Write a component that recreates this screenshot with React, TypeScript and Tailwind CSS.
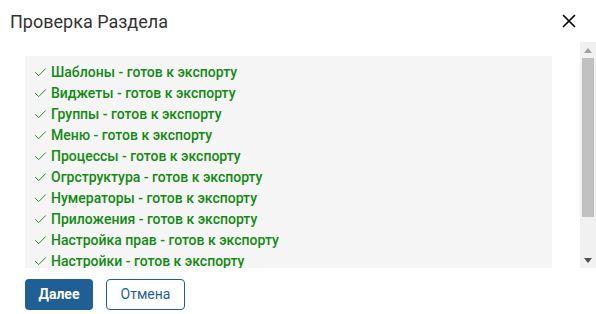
import React from 'react';
import { X, Check } from 'lucide-react';

const sections = [
  'Шаблоны',
  'Виджеты',
  'Группы',
  'Меню',
  'Процессы',
  'Огрструктура',
  'Нумераторы',
  'Приложения',
  'Настройка прав',
  'Настройки',
  'Справочники',
  'Календари',
];

const App: React.FC = () => {
  return (
    <div className="w-[596px] h-[314px] bg-white flex flex-col font-['Roboto',sans-serif] overflow-hidden">
      {/* Header */}
      <div className="h-[42px] shrink-0 flex items-center justify-between pl-[10px] pr-[16px]">
        <h1 className="text-[18px] text-[#333333]">Проверка Раздела</h1>
        <X className="h-[22px] w-[22px] text-black" strokeWidth={1.8} />
      </div>

      {/* Section list with scrollbar */}
      <div className="h-[226px] shrink-0 flex">
        <div className="flex-1 overflow-hidden pt-[14px] pl-[25px] pr-[28px]">
          <div className="bg-[#f5f5f5] py-[6px] px-[8px]">
            {sections.map((name) => (
              <div key={name} className="h-[21px] flex items-center gap-[3px] text-[14px] font-medium text-[#138a13]">
                <Check className="h-[15px] w-[15px] shrink-0" strokeWidth={1.5} />
                <span>{name} - готов к экспорту</span>
              </div>
            ))}
          </div>
        </div>
        <div className="w-[16px] bg-[#f1f1f1] flex flex-col items-center">
          <div className="h-[16px] flex items-center justify-center">
            <svg width="8" height="5" viewBox="0 0 8 5"><path d="M0 5 L4 0 L8 5 Z" fill="#a3a3a3" /></svg>
          </div>
          <div className="w-[12px] h-[159px] bg-[#c1c1c1]" />
          <div className="flex-1" />
          <div className="h-[16px] flex items-center justify-center">
            <svg width="8" height="5" viewBox="0 0 8 5"><path d="M0 0 L8 0 L4 5 Z" fill="#505050" /></svg>
          </div>
        </div>
      </div>

      {/* Footer */}
      <div className="flex items-center gap-[13px] pl-[25px] pt-[11px]">
        <button className="h-[31px] w-[68px] rounded-[4px] bg-[#1f5f96] text-white text-[14px] font-bold">
          Далее
        </button>
        <button className="h-[31px] w-[79px] rounded-[4px] border border-[#1f5f96] bg-white text-[#1f5f96] text-[14px]">
          Отмена
        </button>
      </div>
    </div>
  );
};

export default App;
